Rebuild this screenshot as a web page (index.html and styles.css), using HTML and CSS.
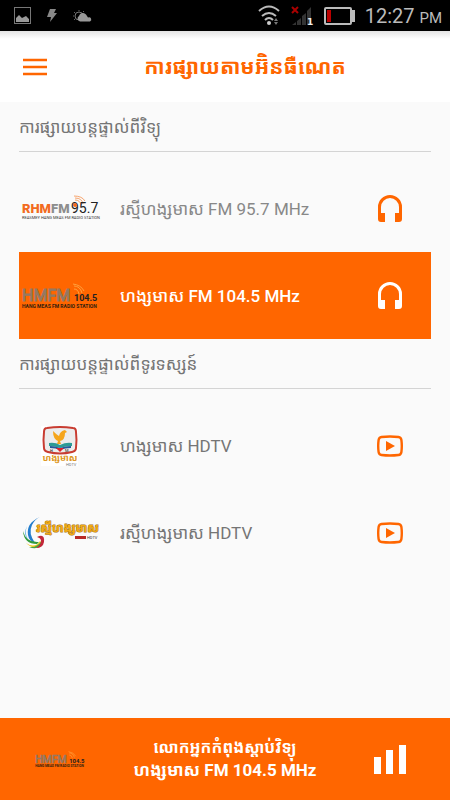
FILE: index.html
```html
<!DOCTYPE html>
<html lang="km">
<head>
    <meta charset="UTF-8">
    <meta name="viewport" content="width=device-width, initial-scale=1.0">
    <title>ការផ្សាយតាមអ៊ិនធឺណេត</title>
    <link rel="stylesheet" href="styles.css">
</head>
<body>
    <!-- shared icons and logos -->
    <svg class="defs" width="0" height="0" aria-hidden="true">
        <symbol id="headphones" viewBox="0 0 24 27">
            <path fill="currentColor" d="M0 12a12 12 0 0 1 24 0v12a3 3 0 0 1-3 3h-4v-9h4v-6a9 9 0 0 0-18 0v6h4v9H3a3 3 0 0 1-3-3z"/>
        </symbol>
        <symbol id="video" viewBox="0 0 26 22">
            <path fill="none" stroke="currentColor" stroke-width="2.4" d="M4.500 2Q13 1 21.500 2 24 2.300 24.400 5 25.200 11 24.400 17 24 19.700 21.500 20 13 21 4.500 20 2 19.700 1.600 17 .8 11 1.600 5 2 2.300 4.500 2z"/>
            <path fill="currentColor" d="M9 6l9 5-9 5z"/>
        </symbol>
        <symbol id="hmfm" viewBox="0 0 76 26">
            <text x="0" y="18" class="logo-outline">HMFM</text>
            <g fill="none" stroke="#ffa03c"><path d="M52 6q4 0 5 5M52 3q6 0 8 7M51 1q8 1 11 7"/></g>
            <text x="52" y="18" class="logo-number" fill="#222">104.5</text>
            <text x="0" y="25" class="logo-station" fill="#31200f">HANG MEAS FM RADIO STATION</text>
        </symbol>
    </svg>

    <div class="status-bar">
        <div class="status-group">
            <svg width="17" height="17" viewBox="0 0 17 17"><rect x=".5" y=".5" width="16" height="16" fill="none" stroke="#777"/><path fill="#999" d="M2 15v-4l3-3 3 3 4-2 3 3v3z"/></svg>
            <svg width="10" height="13" viewBox="0 0 10 13"><path fill="#888" d="M3 0h6L7 4h3L3 13l1-5H0z"/></svg>
            <svg width="18" height="12" viewBox="0 0 18 12"><circle cx="6" cy="6" r="4" fill="none" stroke="#777"/><path stroke="#666" d="M6 0v1M1 2l1 1M0 6h1M1 10l1-1M11 1l-1 1"/><path fill="#999" d="M7 11.500a3 3 0 0 1-1-5.500 4 4 0 0 1 7-1.500l2 3a2 2 0 0 1 2 4z"/></svg>
        </div>
        <div class="status-group">
            <svg width="22" height="21" viewBox="0 0 22 21"><g fill="none" stroke="#bbb" stroke-width="2"><path d="M1 6Q11-3 21 6M4 11q7-6 14 0M7 15q4-4 8 0"/></g><circle cx="11" cy="18" r="2" fill="#ccc"/><path fill="#777" d="M18 13l2 3h-4zM18 20l-2-3h4z"/></svg>
            <svg width="22" height="20" viewBox="0 0 22 20"><g fill="#333"><path d="M1 19l4-3v3zM6 15l4-3v7H6zM11 10l4-3v12h-4zM16 5l4-4v18h-4z"/></g><path stroke="#a00" stroke-width="2" d="M1 1l6 6M7 1L1 7"/><text x="16" y="19" class="sim" fill="#eee">1</text></svg>
            <svg width="31" height="18" viewBox="0 0 31 18"><rect x="1" y="1" width="26" height="16" rx="1" fill="none" stroke="#bbb" stroke-width="2"/><path fill="#bbb" d="M28 3h3v12h-3z"/><path fill="#b00" d="M3 3h4v12H3z"/></svg>
            <span class="clock">12:27 <small>PM</small></span>
        </div>
    </div>

    <header class="header">
        <button class="menu-button" type="button" aria-label="Menu">
            <svg width="24" height="18" viewBox="0 0 24 18"><path stroke="currentColor" stroke-width="2.500" d="M0 2h24M0 9h24M0 16h24"/></svg>
        </button>
        <h1>ការផ្សាយតាមអ៊&zwnj;ិនធឺណេត</h1>
    </header>

    <main class="content">
        <h2>ការផ្សាយបន្តផ្ទាល់ពីវិទ្យុ</h2>
        <ul class="channels">
            <li class="channel muted">
                <svg class="logo" viewBox="0 0 76 26">
                    <text x="0" y="17" class="logo-title" fill="#f26a21">RHM<tspan fill="#8d8d8d">FM</tspan></text>
                    <g fill="none" stroke="#f7a56e"><path d="M53 4q5 0 6 5M53 2q7 0 8 6M52 0q8 0 11 5"/></g>
                    <text x="49" y="17" class="logo-frequency" fill="#222">95.7</text>
                    <circle cx="53" cy="9" r="2" fill="#f26a21"/>
                    <text x="0" y="23" class="logo-caption" fill="#333">REASMEY HANG MEAS FM RADIO STATION</text>
                </svg>
                <span class="name">រស្មីហង្សមាស FM 95.7 MHz</span>
                <button type="button" aria-label="FM 95.7 MHz"><svg width="24" height="27"><use href="#headphones"/></svg></button>
            </li>
            <li class="channel active">
                <svg class="logo"><use href="#hmfm"/></svg>
                <span class="name">ហង្សមាស FM 104.5 MHz</span>
                <button type="button" aria-label="FM 104.5 MHz"><svg width="24" height="27"><use href="#headphones"/></svg></button>
            </li>
        </ul>

        <h2>ការផ្សាយបន្តផ្ទាល់ពីទូរទស្សន៍</h2>
        <ul class="channels">
            <li class="channel">
                <svg class="logo logo-tall" viewBox="0 0 76 40">
                    <path fill="#fff" d="M19 0h37v40H19z"/>
                    <path fill="#ececec" stroke="#c83c31" stroke-width="2" d="M25 2q13-2 26 0 3 0 3 4 1 8 0 16 0 3-4 4-12 3-24 0-4-1-4-4-1-8 0-16 0-4 3-4z"/>
                    <path fill="#f5a51b" d="M31 5q4 4 6 5 1-5 6-6l2 2-2 1q0 7-5 8l1 3h-4l1-3q-5-2-5-10z"/>
                    <path fill="#2c9b95" d="M27 17q6-1 11 2 6-3 12-2v3q-7 0-12 2-5-2-11-2z"/>
                    <path fill="#245a99" d="M28 20q6 0 10 2 5-2 11-2v2q-6 0-11 2-4-2-10-2z"/>
                    <path fill="#df1f27" d="M34 22h8l-4 4z"/>
                    <text x="28" y="26" class="logo-caption" fill="#222">H</text>
                    <text x="43" y="26" class="logo-caption" fill="#222">M</text>
                    <text x="38" y="35" class="logo-khmer" fill="#dd961b" text-anchor="middle">ហង្សមាស</text>
                    <text x="44" y="40" class="logo-caption" fill="#777">HDTV</text>
                </svg>
                <span class="name">ហង្សមាស HDTV</span>
                <button type="button" aria-label="ហង្សមាស HDTV"><svg width="26" height="22"><use href="#video"/></svg></button>
            </li>
            <li class="channel">
                <svg class="logo logo-tall" viewBox="0 0 76 40">
                    <path fill="#247dcc" d="M18 4Q4 10 6 22q1 6 7 8Q6 20 10 12q3-6 8-8z"/>
                    <path fill="#76bce8" d="M5 13q-5 9 2 15Q2 21 5 13z"/>
                    <path fill="#319b3b" d="M1 18q1 13 14 13l2-2Q4 30 1 18z"/>
                    <path fill="#f0ca20" d="M4 30q9 6 14-2l2 2q-6 9-16 0z"/>
                    <path fill="#45a246" d="M7 34q9 1 13-7l1 2q-4 9-14 5z"/>
                    <path fill="#c22739" d="M15 24q8-4 7 5-1 6-8 6 5-3 5-7 0-3-4-4z"/>
                    <text x="14" y="19" class="logo-wide" fill="#f2ac12" stroke="#a8741a">រស្មីហង្សមាស</text>
                    <path fill="#b82b27" d="M53 23h11v3H53z"/>
                    <text x="65" y="26" class="logo-caption" fill="#333">HDTV</text>
                </svg>
                <span class="name">រស្មីហង្សមាស HDTV</span>
                <button type="button" aria-label="រស្មីហង្សមាស HDTV"><svg width="26" height="22"><use href="#video"/></svg></button>
            </li>
        </ul>
    </main>

    <footer class="player">
        <svg class="player-logo"><use href="#hmfm"/></svg>
        <div class="now-playing">
            <p>លោកអ្នកកំពុងស្តាប់វិទ្យុ</p>
            <p class="station">ហង្សមាស FM 104.5 MHz</p>
        </div>
        <svg class="bars" width="32" height="29" viewBox="0 0 32 29"><path fill="#fff" d="M0 12h7v17H0zM12 5h7v24h-7zM25 0h7v29h-7z"/></svg>
    </footer>
</body>
</html>
```
FILE: styles.css
```css
* {
    box-sizing: border-box;
}

body {
    margin: 0;
    min-height: 100vh;
    display: flex;
    flex-direction: column;
    background: #fafafa;
    color: #757575;
    font-family: Roboto, "Noto Sans Khmer", "Khmer OS", sans-serif;
}

h1, h2, p, ul {
    margin: 0;
    padding: 0;
}

svg {
    overflow: visible;
}

button {
    display: flex;
    padding: 0;
    border: none;
    background: none;
    color: inherit;
    cursor: pointer;
}

.defs {
    position: absolute;
}

.status-bar {
    height: 31px;
    display: flex;
    justify-content: space-between;
    padding: 0 8px 0 14px;
    background: #000;
}

.status-group {
    display: flex;
    align-items: center;
    gap: 11px;
}

.status-group:first-child {
    gap: 16px;
}

.sim {
    font: 700 9px "DejaVu Sans", sans-serif;
}

.clock {
    color: #bbb;
    font-size: 20px;
    margin-left: -1px;
}

.clock small {
    font-size: 15px;
}

.header {
    height: 71px;
    display: grid;
    grid-template-columns: 40px 1fr;
    align-items: center;
    padding: 0 23px;
    background: linear-gradient(#e4e4e4, #fff 8px);
    color: #ff6600;
}

.header h1 {
    font-size: 21px;
    line-height: 32px;
    text-align: center;
}

.content {
    flex: 1;
    padding: 0 19px;
}

.content h2 {
    height: 50px;
    border-bottom: 1px solid #d4d4d4;
    font-size: 17px;
    font-weight: 400;
    line-height: 50px;
}

.channels {
    list-style: none;
    padding-top: 13px;
}

.channel {
    height: 87px;
    display: grid;
    grid-template-columns: 76px 1fr 26px;
    align-items: center;
    column-gap: 22px;
    padding: 0 28px 0 3px;
}

.channel button {
    justify-content: center;
    color: #ff6600;
}

.muted {
    color: #888;
}

.channel.active {
    background: #ff6600;
    color: #fff;
}

.channel.active .name {
    font-weight: 500;
}

.channel.active button {
    color: #fff;
}

.name {
    font-size: 17px;
    line-height: 30px;
    white-space: nowrap;
}

.logo {
    width: 76px;
    height: 26px;
}

.logo-tall {
    height: 40px;
}

.logo-title {
    font: 900 13px Roboto, sans-serif;
}

.logo-frequency {
    font: 14px Roboto, sans-serif;
}

.logo-outline {
    font: 16px Roboto, sans-serif;
    fill: #947963;
    stroke: #947963;
}

.logo-number {
    font: 700 9px Roboto, sans-serif;
}

.logo-caption {
    font: 4px Roboto, sans-serif;
}

.logo-station {
    font: 700 5px Roboto, sans-serif;
}

.logo-khmer {
    font-size: 9px;
    font-weight: 700;
}

.logo-wide {
    font-size: 12px;
    font-weight: 700;
    stroke-width: 1px;
    paint-order: stroke;
}

.player {
    height: 82px;
    display: grid;
    grid-template-columns: 50px 1fr 41px;
    align-items: center;
    padding: 0 44px 0 35px;
    background: #ff6600;
    color: #fff;
}

.now-playing {
    font-size: 16px;
    font-weight: 700;
    line-height: 23px;
    text-align: center;
}

.station {
    font-size: 17px;
}

.player-logo {
    width: 50px;
    height: 17px;
}

.bars {
    justify-self: end;
}
```
